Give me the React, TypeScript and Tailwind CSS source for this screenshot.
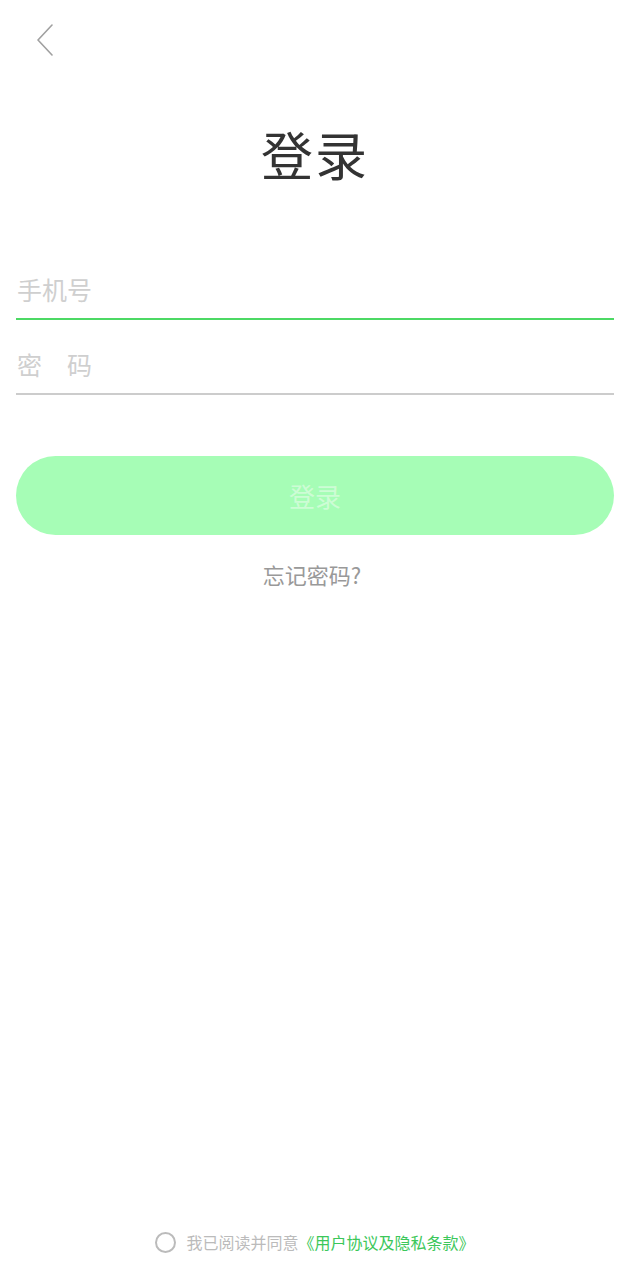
import React from "react";

export default function App() {
  return (
    <div
      className="w-[630px] h-[1280px] bg-white flex flex-col"
      style={{ fontFamily: '"Noto Sans CJK SC", "Noto Sans", sans-serif' }}
    >
      <div className="h-[80px] pl-[36px] pt-[24px]">
        <svg width="18" height="32" viewBox="0 0 18 32" fill="none">
          <path d="M16 1 L2 16 L16 31" stroke="#a0a0a0" strokeWidth="1.6" strokeLinecap="round" strokeLinejoin="round" />
        </svg>
      </div>
      <div className="h-[150px] flex items-start justify-center pt-[38px]">
        <h1 className="text-[52px] leading-[72px] text-[#333333] tracking-[2px]">登录</h1>
      </div>
      <div className="px-4">
        <div className="h-[90px] flex items-end border-b-2 border-[#4cd964] pb-[14px]">
          <span className="text-[25px] leading-[30px] text-[#cfcfcf] pl-[1px]">手机号</span>
        </div>
        <div className="h-[75px] flex items-end border-b-2 border-[#cccccc] pb-[14px]">
          <span className="text-[25px] leading-[30px] text-[#cfcfcf] pl-[1px]">密　码</span>
        </div>
      </div>
      <div className="px-4 mt-[61px]">
        <button className="w-full h-[79px] rounded-full bg-[#a6fdb6] text-[26px] text-[#cdfcd5] flex items-center justify-center">
          登录
        </button>
      </div>
      <div className="mt-[24px] flex justify-center pr-[6px]">
        <span className="text-[22px] leading-[30px] text-[#999999]">忘记密码?</span>
      </div>
      <div className="flex-1" />
      <div className="h-[60px] flex items-start justify-center pt-[10px]">
        <div className="flex items-center">
          <span className="w-[21px] h-[21px] rounded-full border-2 border-[#bbbbbb] mr-[10px]" />
          <span className="text-[16px] leading-[24px] text-[#bbbbbb]">我已阅读并同意</span>
          <span className="text-[16px] leading-[24px] text-[#3cc75a]">《用户协议及隐私条款》</span>
        </div>
      </div>
    </div>
  );
}
